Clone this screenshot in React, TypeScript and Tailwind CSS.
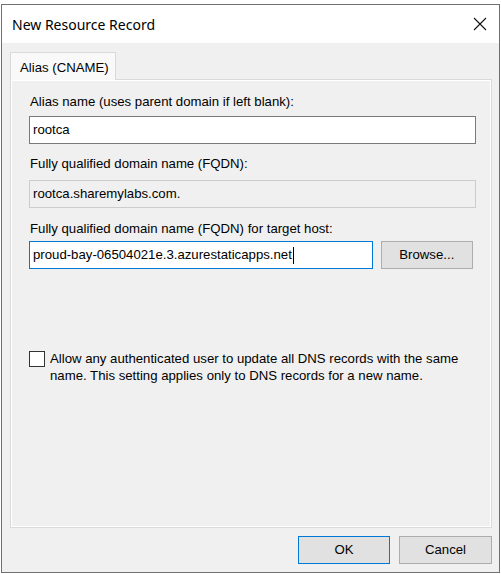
import React from "react";

export default function App() {
  const sans = { fontFamily: '"Liberation Sans", Arial, sans-serif' };
  return (
    <div className="w-[501px] h-[574px] bg-white pt-[4px] pl-[1px]" style={sans}>
      <div className="w-[499px] h-[569px] border border-[#707070] flex flex-col">
        {/* title bar */}
        <div className="h-[38px] bg-white flex items-center justify-between pl-[10px] pr-[10px] shrink-0">
          <span className="text-[14px] text-black" style={{ fontFamily: '"Noto Sans", "Open Sans", sans-serif' }}>
            New Resource Record
          </span>
          <svg width="14" height="14" viewBox="0 0 14 14" className="mr-[2px]">
            <path d="M1 1L13 13M13 1L1 13" stroke="#111" strokeWidth="1.1" />
          </svg>
        </div>
        {/* body */}
        <div className="flex-1 bg-[#f0f0f0] flex flex-col pl-[8px] pr-[6px] pt-[9px]">
          <div className="flex">
            <div className="w-[106px] h-[28px] bg-[#f9f9f9] border border-b-0 border-[#d9d9d9] text-[13.2px] text-black pl-[9px] pt-[5px] relative z-10 -mb-[1px]">
              Alias (CNAME)
            </div>
          </div>
          <div className="w-[482px] h-[449px] border border-[#dadada]">
            <div className="w-full h-full border border-white px-[17px] pt-[13px] text-[13.2px] text-black">
              <div className="pl-[1px] h-[16px] leading-[16px]">Alias name (uses parent domain if left blank):</div>
              <div className="mt-[6px] w-[447px] h-[28px] bg-white border border-[#7a7a7a] flex items-center pl-[3px]">
                rootca
              </div>
              <div className="mt-[12px] pl-[1px] h-[16px] leading-[16px]">Fully qualified domain name (FQDN):</div>
              <div className="mt-[8px] w-[447px] h-[28px] bg-[#f0f0f0] border border-[#cccccc] flex items-center pl-[3px]">
                rootca.sharemylabs.com.
              </div>
              <div className="mt-[13px] pl-[1px] h-[16px] leading-[16px]">Fully qualified domain name (FQDN) for target host:</div>
              <div className="mt-[4px] flex items-center gap-[8px]">
                <div className="w-[346px] h-[28px] bg-white border border-[#0078d7] flex items-center pl-[3px]">
                  proud-bay-06504021e.3.azurestaticapps.net
                  <span className="inline-block w-[1px] h-[17px] bg-black ml-[1px]" />
                </div>
                <div className="w-[93px] h-[28px] bg-[#e1e1e1] border border-[#adadad] flex items-center justify-center">
                  Browse...
                </div>
              </div>
              <div className="mt-[81px] flex items-start">
                <div className="w-[16px] h-[16px] bg-white border border-[#333333] shrink-0 mt-[1px]" />
                <div className="ml-[5px] leading-[17px]">
                  Allow any authenticated user to update all DNS records with the same
                  <br />
                  name. This setting applies only to DNS records for a new name.
                </div>
              </div>
            </div>
          </div>
          <div className="flex justify-end gap-[9px] mt-[8px] mr-[1px]">
            <div className="w-[92px] h-[28px] bg-[#e1e1e1] border border-[#0078d7] flex items-center justify-center text-[13.2px]">
              OK
            </div>
            <div className="w-[93px] h-[28px] bg-[#e1e1e1] border border-[#adadad] flex items-center justify-center text-[13.2px]">
              Cancel
            </div>
          </div>
        </div>
      </div>
    </div>
  );
}
